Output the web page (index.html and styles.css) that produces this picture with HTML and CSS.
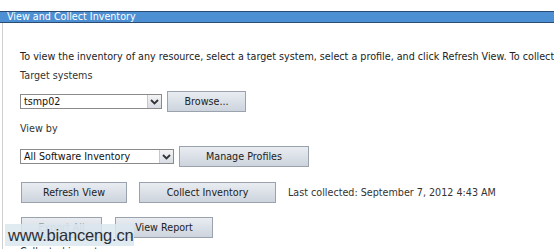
FILE: index.html
```html
<!DOCTYPE html>
<html>
<head>
<meta charset="utf-8">
<link rel="stylesheet" href="styles.css">
</head>
<body>
<div class="panel">
  <div class="titlebar">View and Collect Inventory</div>
  <div class="content">
    <p class="intro">To view the inventory of any resource, select a target system, select a profile, and click Refresh View. To collect inventory, click Collect Inventory.</p>
    <div class="label">Target systems</div>
    <div class="row r1">
      <div class="select s1"><span class="val">tsmp02</span><span class="arrow"><svg width="9" height="6" viewBox="0 0 9 6"><path d="M1 1 L4.5 4.5 L8 1" fill="none" stroke="#333" stroke-width="1.8"/></svg></span></div>
      <button class="btn b-browse">Browse...</button>
    </div>
    <div class="label lv">View by</div>
    <div class="row r2">
      <div class="select s2"><span class="val">All Software Inventory</span><span class="arrow"><svg width="9" height="6" viewBox="0 0 9 6"><path d="M1 1 L4.5 4.5 L8 1" fill="none" stroke="#333" stroke-width="1.8"/></svg></span></div>
      <button class="btn b-manage">Manage Profiles</button>
    </div>
    <div class="row r3">
      <button class="btn b-refresh">Refresh View</button>
      <button class="btn b-collect">Collect Inventory</button>
      <span class="last">Last collected: September 7, 2012 4:43 AM</span>
    </div>
    <div class="row r4">
      <button class="btn b-export" disabled>Export All</button>
      <button class="btn b-report">View Report</button>
    </div>
    <div class="more">Collected inventory</div>
  </div>
  <div class="watermark">www.bianceng.cn</div>
</div>
</body>
</html>
```
FILE: styles.css
```css
html, body {
  margin: 0;
  padding: 0;
  background: #fff;
  overflow: hidden;
}
body {
  font-family: "DejaVu Sans", Verdana, sans-serif;
  font-size: 9.6px;
  color: #222;
  width: 554px;
  height: 249px;
}
.panel {
  position: relative;
  padding-top: 11px;
  height: 238px;
  overflow: hidden;
}
.titlebar {
  height: 10px;
  line-height: 10px;
  background: #4d8fd3;
  border-top: 1px solid #2a4c74;
  border-bottom: 1px solid #2a4c74;
  color: #fff;
  padding-left: 7px;
  font-size: 9.6px;
}
.content {
  border-left: 1px solid #cfcfcf;
  margin-left: 2px;
  padding-left: 17px;
  padding-top: 28px;
  height: 300px;
  overflow: hidden;
}
.intro {
  margin: 0;
  white-space: nowrap;
  line-height: 12px;
  color: #222;
}
.label {
  margin-top: 7px;
  line-height: 12px;
  color: #333;
}
.lv {
  margin-top: 11px;
}
.row {
  display: flex;
  align-items: center;
}
.r1 { margin-top: 9px; }
.r2 { margin-top: 11px; }
.r3 { margin-top: 15px; }
.r4 { margin-top: 14px; }
.select {
  box-sizing: border-box;
  height: 15px;
  border: 1px solid #8a8a8a;
  display: flex;
  align-items: center;
  justify-content: space-between;
  background: #fff;
  padding-left: 3px;
  color: #111;
}
.s1 { width: 142px; }
.s2 { width: 154px; }
.arrow {
  box-sizing: border-box;
  width: 14px;
  height: 13px;
  border-left: 1px solid #c8c8c8;
  background: linear-gradient(#f4f4f4, #d8dde4);
  display: flex;
  align-items: center;
  justify-content: center;
}
.btn {
  box-sizing: border-box;
  height: 21px;
  border: 1px solid #9aa3ad;
  background: linear-gradient(#e9edf2, #cdd4dd);
  font-family: "DejaVu Sans", Verdana, sans-serif;
  font-size: 9.6px;
  color: #222;
  padding: 0;
  margin: 0;
}
.b-browse { width: 79px; margin-left: 5px; }
.b-manage { width: 130px; margin-left: 5px; }
.b-refresh { width: 106px; margin-left: 1px; }
.b-collect { width: 137px; margin-left: 12px; }
.b-export { width: 81px; margin-left: 1px; color: #9aa; }
.b-report { width: 98px; margin-left: 13px; }
.last {
  margin-left: 12px;
  color: #333;
}
.more {
  margin-top: 8px;
  color: #333;
}
.watermark {
  position: absolute;
  left: 5px;
  top: 224px;
  width: 129px;
  height: 22px;
  padding-left: 3px;
  box-sizing: border-box;
  background: rgba(218, 230, 238, 0.85);
  font-family: "Liberation Sans", Arial, sans-serif;
  font-size: 16.5px;
  line-height: 22px;
  color: #2a2f36;
  white-space: nowrap;
  letter-spacing: -0.2px;
}
```
